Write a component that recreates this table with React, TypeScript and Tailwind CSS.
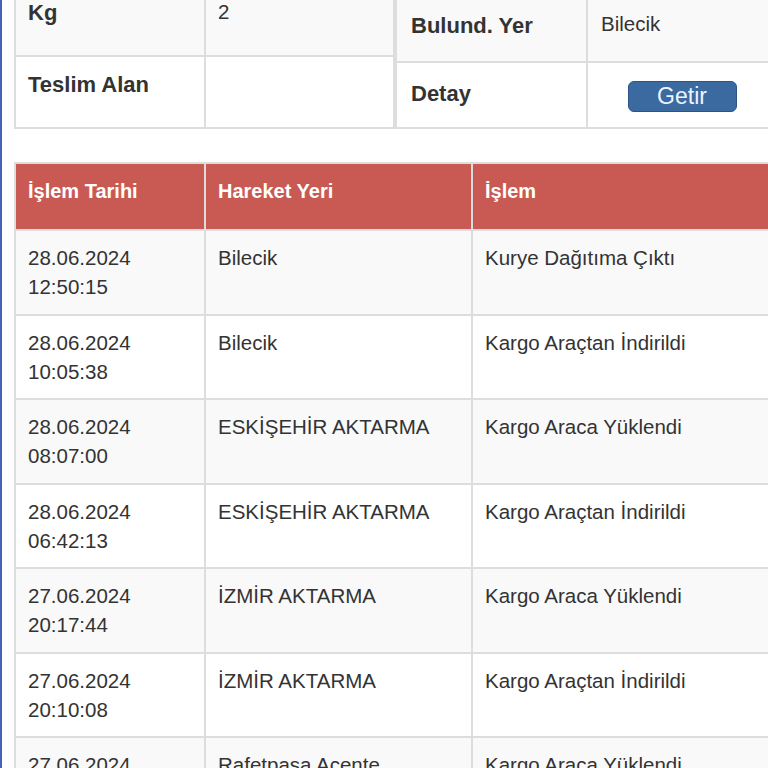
import React from "react";

const rows = [
  ["28.06.2024", "12:50:15", "Bilecik", "Kurye Dağıtıma Çıktı"],
  ["28.06.2024", "10:05:38", "Bilecik", "Kargo Araçtan İndirildi"],
  ["28.06.2024", "08:07:00", "ESKİŞEHİR AKTARMA", "Kargo Araca Yüklendi"],
  ["28.06.2024", "06:42:13", "ESKİŞEHİR AKTARMA", "Kargo Araçtan İndirildi"],
  ["27.06.2024", "20:17:44", "İZMİR AKTARMA", "Kargo Araca Yüklendi"],
  ["27.06.2024", "20:10:08", "İZMİR AKTARMA", "Kargo Araçtan İndirildi"],
  ["27.06.2024", "18:32:51", "Rafetpaşa Acente", "Kargo Araca Yüklendi"],
];

export default function App() {
  return (
    <div className="w-[768px] h-[768px] overflow-hidden bg-white border-l-2 border-[#4462b8] font-['Liberation_Sans',Arial,sans-serif] text-[#333]">
      <div className="w-[820px] pl-[12px] -mt-[17px]">
        {/* top info tables */}
        <div className="flex items-end">
          <div className="border-l-2 border-t-2 border-[#ddd]">
            <div className="flex h-[72px] bg-[#f9f9f9]">
              <div className="w-[190px] border-r-2 border-b-2 border-[#ddd] px-[12px] pt-[12px] text-[22px] leading-[31px] font-bold">
                Kg
              </div>
              <div className="w-[189px] border-r-2 border-b-2 border-[#ddd] px-[12px] pt-[12px] text-[20.5px] leading-[29.3px]">
                2
              </div>
            </div>
            <div className="flex h-[72px] bg-white">
              <div className="w-[190px] border-r-2 border-b-2 border-[#ddd] px-[12px] pt-[12px] text-[22px] leading-[31px] font-bold">
                Teslim Alan
              </div>
              <div className="w-[189px] border-r-2 border-b-2 border-[#ddd] px-[12px] pt-[12px] text-[20.5px] leading-[29.3px]"></div>
            </div>
          </div>
          <div className="border-l-2 border-t-2 border-[#ddd]">
            <div className="flex h-[68px] bg-[#f9f9f9]">
              <div className="w-[191px] border-r-2 border-b-2 border-[#ddd] pl-[14px] pr-[12px] pt-[15px] text-[22px] leading-[31px] font-bold">
                Bulund. Yer
              </div>
              <div className="w-[190px] border-r-2 border-b-2 border-[#ddd] pl-[13px] pr-[12px] pt-[14px] text-[20.5px] leading-[29.3px]">
                Bilecik
              </div>
            </div>
            <div className="flex h-[66px] bg-white">
              <div className="w-[191px] border-r-2 border-b-2 border-[#ddd] pl-[14px] pr-[12px] pt-[15px] text-[22px] leading-[31px] font-bold">
                Detay
              </div>
              <div className="w-[190px] border-r-2 border-b-2 border-[#ddd] flex justify-center pt-[18px]">
                <button className="w-[109px] h-[31px] rounded-[6px] bg-[#3b6aa1] border border-[#2c5485] text-[#eef4ff] text-[23px] leading-[29px] font-['Liberation_Sans',Arial,sans-serif]">
                  Getir
                </button>
              </div>
            </div>
          </div>
        </div>

        {/* movements table */}
        <div className="mt-[33px] border-l-2 border-t-2 border-[#ddd]">
          <div className="flex h-[67px] bg-[#c95a53] text-white font-bold text-[20px] leading-[29.25px]">
            <div className="w-[190px] border-r-2 border-b-2 border-[#ddd] px-[12px] pt-[13px]">İşlem Tarihi</div>
            <div className="w-[267px] border-r-2 border-b-2 border-[#ddd] px-[12px] pt-[13px]">Hareket Yeri</div>
            <div className="flex-1 border-r-2 border-b-2 border-[#ddd] px-[12px] pt-[13px]">İşlem</div>
          </div>
          {rows.map((r, i) => (
            <div
              key={i}
              className={`flex h-[84.5px] text-[20.5px] leading-[29.25px] ${i % 2 === 0 ? "bg-[#f9f9f9]" : "bg-white"}`}
            >
              <div className="w-[190px] border-r-2 border-b-2 border-[#ddd] px-[12px] pt-[12px]">
                <div>{r[0]}</div>
                <div>{r[1]}</div>
              </div>
              <div className="w-[267px] border-r-2 border-b-2 border-[#ddd] px-[12px] pt-[12px]">{r[2]}</div>
              <div className="flex-1 border-r-2 border-b-2 border-[#ddd] px-[12px] pt-[12px]">{r[3]}</div>
            </div>
          ))}
        </div>
      </div>
    </div>
  );
}
